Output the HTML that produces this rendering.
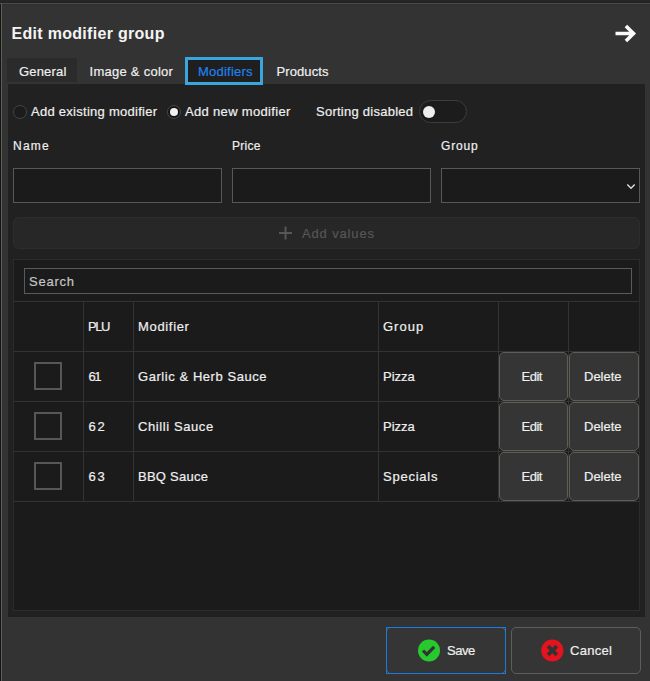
<!DOCTYPE html>
<html><head><meta charset="utf-8">
<style>
*{box-sizing:border-box;margin:0;padding:0}
html,body{width:650px;height:681px;overflow:hidden;background:#232323}
body{position:relative;font-family:"Liberation Sans",sans-serif;color:#efefef}
.a{position:absolute}
.t{position:absolute;white-space:nowrap;line-height:13px;font-size:13px;-webkit-text-stroke:0.2px currentColor}
#dlg{position:absolute;left:0;top:3px;width:660px;height:700px;background:#333;border-top:1px solid #4b4e49;border-left:2px solid #5a6058}
#edge{position:absolute;left:0;top:4px;width:1px;height:677px;background:#141414}
#panel{position:absolute;left:8px;top:84px;width:637px;height:533px;background:#212121}
.inp{position:absolute;background:#1b1b1b;border:1px solid #585858}
.grid{position:absolute;background:#333}
.btn{position:absolute;background:#353535;border:1px solid #5b6057;border-radius:5px}
</style></head>
<body>
<div class="a" style="left:0;top:0;width:650px;height:2px;background:#262626"></div>
<div class="a" style="left:0;top:2px;width:650px;height:1px;background:#212121"></div>
<div id="dlg"></div>
<div id="edge"></div>
<div class="a" style="left:2px;top:4px;width:648px;height:1px;background:#2e2e2e"></div>

<!-- title -->
<div class="t" style="left:11.5px;top:26px;font-size:16px;line-height:16px;font-weight:700;letter-spacing:0.3px;color:#f4f4f4;-webkit-text-stroke:0">Edit modifier group</div>
<svg class="a" style="left:610px;top:20px" width="30" height="28" viewBox="610 20 30 28">
 <path d="M615.5 33.5 H633 M625.9 25.9 L633.5 33.5 L625.9 41.1" fill="none" stroke="#fafafa" stroke-width="3.6"/>
</svg>

<div id="panel"></div>
<!-- tabs -->
<div class="a" style="left:7px;top:58px;width:70px;height:24px;background:#2b2b2b"></div>
<div class="t" style="left:19px;top:65px;letter-spacing:0.17px">General</div>
<div class="t" style="left:89.5px;top:65px;letter-spacing:0.27px">Image &amp; color</div>
<div class="a" style="left:185px;top:57px;width:78px;height:28px;border:3px solid #3ba6dd;background:#1f1f1f"></div>
<div class="t" style="left:198px;top:65px;letter-spacing:0.22px;color:#1e82ee">Modifiers</div>
<div class="t" style="left:276.5px;top:65px;letter-spacing:0.1px">Products</div>


<!-- radios -->
<div class="a" style="left:13px;top:104.5px;width:14px;height:14px;border-radius:50%;border:1px solid #454545;background:#1c1c1c"></div>
<div class="t" style="left:31px;top:105px;letter-spacing:0.27px">Add existing modifier</div>
<div class="a" style="left:167px;top:104.5px;width:14px;height:14px;border-radius:50%;border:1px solid #4a4a4a;background:#141414"></div>
<div class="a" style="left:170px;top:107.5px;width:8px;height:8px;border-radius:50%;background:#f0f0f0"></div>
<div class="t" style="left:185px;top:105px;letter-spacing:0.33px">Add new modifier</div>
<div class="t" style="left:316px;top:105px;letter-spacing:0.25px">Sorting disabled</div>
<div class="a" style="left:419px;top:100px;width:48px;height:23px;border-radius:12px;border:1px solid #3d3d3d;background:#1c1c1c"></div>
<div class="a" style="left:423px;top:105.5px;width:12px;height:12px;border-radius:50%;background:#eeeeee"></div>

<!-- labels -->
<div class="t" style="left:13px;top:140px;font-size:12px;line-height:12px;letter-spacing:1.25px">Name</div>
<div class="t" style="left:232px;top:140px;font-size:12px;line-height:12px;letter-spacing:0.3px">Price</div>
<div class="t" style="left:441px;top:140px;font-size:12px;line-height:12px;letter-spacing:0.8px">Group</div>

<!-- inputs -->
<div class="inp" style="left:13px;top:168px;width:209px;height:35px"></div>
<div class="inp" style="left:232px;top:168px;width:199px;height:35px"></div>
<div class="inp" style="left:441px;top:168px;width:199px;height:35px"></div>
<svg class="a" style="left:620px;top:178px" width="20" height="16" viewBox="620 178 20 16">
 <path d="M627.3 184.4 L631 188.2 L634.7 184.4" fill="none" stroke="#dddddd" stroke-width="1.4"/>
</svg>

<!-- add values -->
<div class="a" style="left:13px;top:217px;width:627px;height:32px;border-radius:6px;border:1px solid #2b2e2f;background:#272727"></div>
<svg class="a" style="left:276px;top:224px" width="20" height="20" viewBox="276 224 20 20">
 <path d="M279 233 H292 M285.5 226.5 V239.5" fill="none" stroke="#575757" stroke-width="2"/>
</svg>
<div class="t" style="left:302px;top:227px;letter-spacing:0.85px;color:#565656">Add values</div>

<!-- table container -->
<div class="a" style="left:13px;top:259px;width:627px;height:352px;background:#1b1b1b;border:1px solid #2c2c2c"></div>
<div class="inp" style="left:24px;top:268px;width:608px;height:26px;border-color:#5a5a5a"></div>
<div class="t" style="left:29px;top:274.5px;letter-spacing:0.76px;color:#c4c4c4">Search</div>

<!-- grid lines -->
<div class="grid" style="left:14px;top:301px;width:625px;height:1px"></div>
<div class="grid" style="left:14px;top:351px;width:625px;height:1px"></div>
<div class="grid" style="left:14px;top:401px;width:625px;height:1px"></div>
<div class="grid" style="left:14px;top:451px;width:625px;height:1px"></div>
<div class="grid" style="left:14px;top:501px;width:625px;height:1px"></div>
<div class="grid" style="left:83px;top:301px;width:1px;height:200px"></div>
<div class="grid" style="left:133px;top:301px;width:1px;height:200px"></div>
<div class="grid" style="left:378px;top:301px;width:1px;height:200px"></div>
<div class="grid" style="left:498px;top:301px;width:1px;height:200px"></div>
<div class="grid" style="left:568px;top:301px;width:1px;height:200px"></div>

<!-- header -->
<div class="t" style="left:88px;top:320px;letter-spacing:-1.4px">PLU</div>
<div class="t" style="left:138px;top:320px;letter-spacing:0.67px">Modifier</div>
<div class="t" style="left:383px;top:320px;letter-spacing:1px">Group</div>

<!-- rows -->
<div class="a" style="left:34px;top:362px;width:28px;height:28px;border:2px solid #575757"></div>
<div class="t" style="left:88.5px;top:370px;letter-spacing:-1.6px">61</div>
<div class="t" style="left:138px;top:370px;letter-spacing:0.56px">Garlic &amp; Herb Sauce</div>
<div class="t" style="left:383px;top:370px">Pizza</div>
<div class="btn" style="left:499px;top:352px;width:69px;height:49px"></div>
<div class="btn" style="left:569px;top:352px;width:70px;height:49px"></div>
<div class="t" style="left:521.5px;top:370px;letter-spacing:-0.5px">Edit</div>
<div class="t" style="left:584px;top:370px">Delete</div>

<div class="a" style="left:34px;top:412px;width:28px;height:28px;border:2px solid #575757"></div>
<div class="t" style="left:88.5px;top:420px;letter-spacing:1.7px">62</div>
<div class="t" style="left:138px;top:420px;letter-spacing:0.59px">Chilli Sauce</div>
<div class="t" style="left:383px;top:420px">Pizza</div>
<div class="btn" style="left:499px;top:402px;width:69px;height:49px"></div>
<div class="btn" style="left:569px;top:402px;width:70px;height:49px"></div>
<div class="t" style="left:521.5px;top:420px;letter-spacing:-0.5px">Edit</div>
<div class="t" style="left:584px;top:420px">Delete</div>

<div class="a" style="left:34px;top:462px;width:28px;height:28px;border:2px solid #575757"></div>
<div class="t" style="left:88.5px;top:470px;letter-spacing:1.7px">63</div>
<div class="t" style="left:138px;top:470px;letter-spacing:0.25px">BBQ Sauce</div>
<div class="t" style="left:383px;top:470px;letter-spacing:0.76px">Specials</div>
<div class="btn" style="left:499px;top:452px;width:69px;height:49px"></div>
<div class="btn" style="left:569px;top:452px;width:70px;height:49px"></div>
<div class="t" style="left:521.5px;top:470px;letter-spacing:-0.5px">Edit</div>
<div class="t" style="left:584px;top:470px">Delete</div>

<!-- footer -->
<div class="btn" style="left:386px;top:627px;width:120px;height:47px"></div>
<div class="a" style="left:386px;top:627px;width:120px;height:47px;border:1px solid #1a7ae0"></div>
<svg class="a" style="left:418px;top:639px" width="23" height="23" viewBox="418 639 23 23">
 <circle cx="429" cy="650.5" r="11" fill="#26ca2d"/>
 <path d="M423 650.5 L426.8 654.4 L434.2 646.9" fill="none" stroke="#333" stroke-width="3.2"/>
</svg>
<div class="t" style="left:447px;top:644px;letter-spacing:-0.5px">Save</div>

<div class="btn" style="left:511px;top:627px;width:130px;height:47px"></div>
<svg class="a" style="left:540px;top:638px" width="25" height="25" viewBox="540 638 25 25">
 <circle cx="552.3" cy="650.5" r="11.1" fill="#e5131e"/>
 <path d="M548 646.1 L556.8 654.9 M556.8 646.1 L548 654.9" fill="none" stroke="#333" stroke-width="3.8"/>
</svg>
<div class="t" style="left:570px;top:644px;letter-spacing:0.3px">Cancel</div>
</body></html>
